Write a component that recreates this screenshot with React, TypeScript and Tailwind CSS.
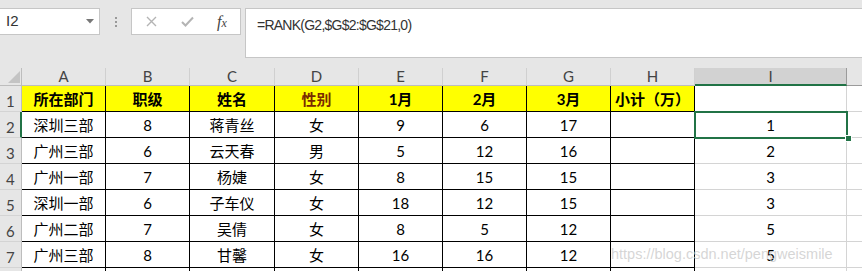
import React from 'react';

const COLS = [84, 84, 85, 84, 84, 84, 84, 84, 152];
const LETTERS = ['A', 'B', 'C', 'D', 'E', 'F', 'G', 'H', 'I'];

const HEADER = ['所在部门', '职级', '姓名', '性别', '1月', '2月', '3月', '小计（万）', ''];

const ROWS = [
  ['深圳三部', '8', '蒋青丝', '女', '9', '6', '17', '', '1'],
  ['广州三部', '6', '云天春', '男', '5', '12', '16', '', '2'],
  ['广州一部', '7', '杨婕', '女', '8', '15', '15', '', '3'],
  ['深圳一部', '6', '子车仪', '女', '18', '12', '15', '', '3'],
  ['广州二部', '7', '吴倩', '女', '8', '5', '12', '', '5'],
  ['广州三部', '8', '甘馨', '女', '16', '16', '12', '', '5'],
  ['', '', '', '', '', '', '', '', ''],
];

const cellFont = { fontFamily: 'Lato, "Noto Sans CJK SC", sans-serif' };
const uiFont = { fontFamily: '"Liberation Sans", Arial, sans-serif' };

function RowHead({ n, selected }: { n: number; selected?: boolean }) {
  return (
    <div
      className={`w-[22px] shrink-0 h-full bg-[#e6e6e6] border-b border-b-[#d4d4d4] flex items-end pl-[6px] pb-[1px] text-[15px] leading-[18px] text-[#444] ${
        selected ? 'border-r-2 border-r-[#217346]' : 'border-r border-r-[#bdbdbd]'
      }`}
      style={cellFont}
    >
      {n < 8 ? n : ''}
    </div>
  );
}

function Cell({ text, col, yellow, bold, red }: { text: string; col: number; yellow?: boolean; bold?: boolean; red?: boolean }) {
  const inTable = col < 8;
  return (
    <div
      className={`shrink-0 h-full flex items-center justify-center pt-[2px] text-[15px] border-r border-b ${
        inTable ? 'border-black' : 'border-[#d4d4d4]'
      } ${yellow ? 'bg-[#ffff00]' : 'bg-white'} ${bold ? 'font-bold' : ''} ${red ? 'text-[#7a2a00]' : 'text-black'}`}
      style={{ width: COLS[col], ...cellFont }}
    >
      {text}
    </div>
  );
}

export default function App() {
  return (
    <div className="w-[862px] h-[271px] overflow-hidden bg-[#e6e6e6] relative select-none">
      {/* formula bar area */}
      <div className="h-[68px] flex items-start pt-[8px]">
        <div className="w-[100px] h-[27px] bg-white border border-[#c6c6c6] border-l-0 flex items-center justify-between pl-[6px] pr-[5px]">
          <span className="text-[15px] text-[#333]" style={uiFont}>I2</span>
          <svg width="8" height="5" viewBox="0 0 8 5"><path d="M0 0h8L4 4.5z" fill="#777" /></svg>
        </div>
        <div className="w-[31px] h-[27px] flex flex-col items-center justify-center gap-[2px]">
          <span className="w-[2px] h-[2px] bg-[#999]" />
          <span className="w-[2px] h-[2px] bg-[#999]" />
          <span className="w-[2px] h-[2px] bg-[#999]" />
        </div>
        <div className="w-[110px] h-[27px] bg-white border border-[#c6c6c6] flex items-center">
          <div className="w-[37px] flex justify-center pl-[2px]">
            <svg width="11" height="11" viewBox="0 0 11 11"><path d="M1 1l9 9M10 1l-9 9" stroke="#b4b4b4" strokeWidth="1.4" /></svg>
          </div>
          <div className="w-[35px] flex justify-center pl-[2px]">
            <svg width="13" height="11" viewBox="0 0 13 11"><path d="M1 6l3.5 3.5L12 1.5" stroke="#b4b4b4" strokeWidth="2" fill="none" /></svg>
          </div>
          <div className="w-[36px] flex justify-center">
            <span className="italic text-[16px] text-[#444]" style={{ fontFamily: '"Liberation Serif", serif' }}>
              f<span className="text-[12px]">x</span>
            </span>
          </div>
        </div>
        <div className="w-[4px]" />
        <div className="flex-1 h-[50px] bg-white border border-[#c6c6c6] border-r-0 pl-[11px] pt-[3px]">
          <span className="text-[14px] tracking-[-0.75px] text-[#333]" style={uiFont}>=RANK(G2,$G$2:$G$21,0)</span>
        </div>
      </div>

      {/* column headers */}
      <div className="flex h-[18px]">
        <div className="w-[22px] shrink-0 h-full border-r border-b border-[#bdbdbd] relative">
          <svg className="absolute left-[8px] top-[3px]" width="12" height="12" viewBox="0 0 12 12"><path d="M12 0V12H0z" fill="#c4c4c4" /></svg>
        </div>
        {LETTERS.map((l, i) => (
          <div
            key={l}
            className={`shrink-0 h-full flex items-center justify-center text-[15px] text-[#444] ${
              i === 8
                ? 'bg-[#d2d2d2] border-b-2 border-b-[#217346] border-r border-r-[#9b9b9b]'
                : 'border-r border-r-[#d0d0d0] border-b border-b-[#bdbdbd]'
            }`}
            style={{ width: COLS[i], ...cellFont }}
          >
            {l}
          </div>
        ))}
        <div className="flex-1 h-full border-b border-[#9b9b9b]" />
      </div>

      {/* row 1 */}
      <div className="flex h-[26px]">
        <RowHead n={1} />
        {HEADER.map((t, i) => (
          <Cell key={i} text={t} col={i} yellow={i < 8} bold red={i === 3} />
        ))}
        <div className="flex-1 h-full bg-white border-b border-[#d4d4d4]" />
      </div>

      {ROWS.map((r, ri) => (
        <div key={ri} className="flex h-[26px]">
          <RowHead n={ri + 2} selected={ri === 0} />
          {r.map((t, i) =>
            ri === 0 && i === 8 ? (
              <div key={i} className="relative shrink-0">
                <Cell text={t} col={i} />
                <div className="absolute left-[-1px] top-[-1px] w-[154px] h-[28px] border-2 border-[#217346]" />
                <div className="absolute right-[-5px] bottom-[-4px] w-[7px] h-[7px] bg-[#217346] border border-white" />
              </div>
            ) : (
              <Cell key={i} text={t} col={i} />
            )
          )}
          <div className="flex-1 h-full bg-white border-b border-[#d4d4d4]" />
        </div>
      ))}

      <div
        className="absolute left-[611px] top-[244px] text-[14.5px] text-[#c8c8c8]/75 whitespace-nowrap pointer-events-none"
        style={uiFont}
      >
        https://blog.csdn.net/pengweismile
      </div>
    </div>
  );
}
